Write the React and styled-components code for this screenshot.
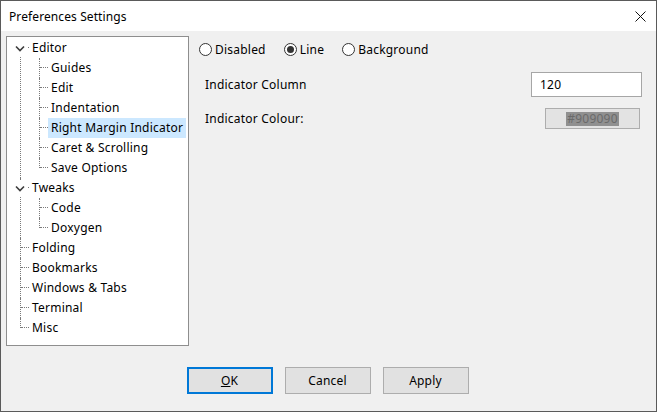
import React from 'react';
import styled, { createGlobalStyle } from 'styled-components';

const Global = createGlobalStyle`
  html, body { margin: 0; padding: 0; background: #f0f0f0; }
  body { font-family: "Noto Sans", "Liberation Sans", sans-serif; font-size: 12px; letter-spacing: 0.22px; color: #000; }
  * { box-sizing: border-box; }
`;

const Window = styled.div`
  width: 657px;
  height: 412px;
  border: 1px solid #5a5a5a;
  background: #f0f0f0;
  display: flex;
  flex-direction: column;
`;

const TitleBar = styled.div`
  height: 30px;
  background: #fff;
  display: flex;
  align-items: center;
  justify-content: space-between;
  padding: 0 10px 0 8px;
  font-size: 12px;
  letter-spacing: 0.1px;
`;

const Body = styled.div`
  flex: 1;
  display: flex;
  flex-direction: column;
  padding: 5px 14px 17px 5px;
`;

const Main = styled.div`
  display: flex;
  gap: 10px;
  height: 310px;
`;

const TreePanel = styled.ul`
  width: 183px;
  height: 310px;
  margin: 0;
  padding: 1px 0 0 0;
  list-style: none;
  background: #fff;
  border: 1px solid #8e8e8e;
`;

const Group = styled.ul`
  margin: 0;
  padding: 0;
  list-style: none;
`;

const Item = styled.li`
  position: relative;
  &::before {
    content: '';
    position: absolute;
    left: ${p => 13 + 19 * p.$level}px;
    top: ${p => (p.$first && p.$level === 0 ? 9 : 0)}px;
    height: ${p => (p.$last ? '10px' : p.$first && p.$level === 0 ? 'calc(100% - 9px)' : '100%')};
    border-left: 1px dotted #7a7a7a;
  }
  &::after {
    content: '';
    position: absolute;
    left: ${p => 14 + 19 * p.$level}px;
    top: 9px;
    width: 8px;
    border-top: 1px dotted #7a7a7a;
  }
`;

const Row = styled.div`
  display: flex;
  align-items: center;
  height: 20px;
  padding-left: ${p => 5 + 19 * p.$level}px;
`;

const Gutter = styled.span`
  position: relative;
  z-index: 1;
  width: 16px;
  height: 16px;
  display: flex;
  align-items: center;
  justify-content: center;
  background: ${p => (p.$mask ? '#fff' : 'transparent')};
`;

const Label = styled.span`
  margin-left: 1px;
  padding: 0 3px;
  line-height: 20px;
  height: 20px;
  white-space: nowrap;
  background: ${p => (p.$selected ? '#cce8ff' : 'transparent')};
`;

const Panel = styled.div`
  flex: 1;
  display: flex;
  flex-direction: column;
`;

const RadioRow = styled.div`
  display: flex;
  align-items: center;
  height: 20px;
  margin-top: 3px;
`;

const RadioOption = styled.label`
  display: flex;
  align-items: center;
  gap: 3px;
  margin-right: ${p => p.$gap || 0}px;
`;

const RadioCircle = styled.span`
  width: 13px;
  height: 13px;
  border-radius: 50%;
  border: 1px solid #333;
  background: #fff;
  display: flex;
  align-items: center;
  justify-content: center;
  &::after {
    content: '';
    width: 7px;
    height: 7px;
    border-radius: 50%;
    background: ${p => (p.$checked ? '#333' : 'transparent')};
  }
`;

const FieldRow = styled.div`
  display: flex;
  align-items: center;
  justify-content: space-between;
  height: ${p => p.$h}px;
  margin-top: ${p => p.$mt}px;
  padding-left: 6px;
`;

const FieldLabel = styled.span`
  margin-top: -1px;
`;

const TextInput = styled.div`
  width: 111px;
  height: 25px;
  background: #fff;
  border: 1px solid #a6a6a6;
  display: flex;
  align-items: center;
  padding-left: 8px;
`;

const ColourButton = styled.div`
  width: 95px;
  height: 21px;
  margin-right: 2px;
  background: #e3e3e3;
  border: 1px solid #adadad;
  display: flex;
  align-items: center;
  justify-content: center;
`;

const ColourText = styled.span`
  background: #909090;
  color: #6a6a6a;
  line-height: 14px;
  padding: 0 1px;
`;

const Footer = styled.div`
  display: flex;
  justify-content: center;
  gap: 12px;
  margin-top: 21px;
  padding-left: 7px;
`;

const Button = styled.div`
  width: 86px;
  height: 27px;
  background: #e1e1e1;
  border: ${p => (p.$default ? '2px solid #0078d7' : '1px solid #adadad')};
  display: flex;
  align-items: center;
  justify-content: center;
`;

const Chevron = () => (
  <svg width="10" height="7" viewBox="0 0 10 7">
    <polyline points="1,1.5 5,5.5 9,1.5" fill="none" stroke="#3d3d3d" strokeWidth="1.6" />
  </svg>
);

const CloseIcon = () => (
  <svg width="11" height="11" viewBox="0 0 11 11">
    <path d="M0.5 0.5 L10.5 10.5 M10.5 0.5 L0.5 10.5" stroke="#111" strokeWidth="1" />
  </svg>
);

const tree = [
  {
    label: 'Editor',
    children: [
      { label: 'Guides' },
      { label: 'Edit' },
      { label: 'Indentation' },
      { label: 'Right Margin Indicator', selected: true },
      { label: 'Caret & Scrolling' },
      { label: 'Save Options' },
    ],
  },
  { label: 'Tweaks', children: [{ label: 'Code' }, { label: 'Doxygen' }] },
  { label: 'Folding' },
  { label: 'Bookmarks' },
  { label: 'Windows & Tabs' },
  { label: 'Terminal' },
  { label: 'Misc' },
];

function TreeNode({ node, level, first, last }) {
  const hasChildren = !!node.children;
  return (
    <Item $level={level} $first={first} $last={last}>
      <Row $level={level}>
        <Gutter $mask={hasChildren}>{hasChildren && <Chevron />}</Gutter>
        <Label $selected={node.selected}>{node.label}</Label>
      </Row>
      {hasChildren && (
        <Group>
          {node.children.map((c, i) => (
            <TreeNode key={c.label} node={c} level={level + 1} first={i === 0} last={i === node.children.length - 1} />
          ))}
        </Group>
      )}
    </Item>
  );
}

export default function App() {
  return (
    <>
      <Global />
      <Window>
        <TitleBar>
          <span>Preferences Settings</span>
          <CloseIcon />
        </TitleBar>
        <Body>
          <Main>
            <TreePanel>
              {tree.map((n, i) => (
                <TreeNode key={n.label} node={n} level={0} first={i === 0} last={i === tree.length - 1} />
              ))}
            </TreePanel>
            <Panel>
              <RadioRow>
                <RadioOption $gap={18}>
                  <RadioCircle />
                  <span>Disabled</span>
                </RadioOption>
                <RadioOption $gap={18}>
                  <RadioCircle $checked />
                  <span>Line</span>
                </RadioOption>
                <RadioOption>
                  <RadioCircle />
                  <span>Background</span>
                </RadioOption>
              </RadioRow>
              <FieldRow $h={25} $mt={13}>
                <FieldLabel>Indicator Column</FieldLabel>
                <TextInput>120</TextInput>
              </FieldRow>
              <FieldRow $h={21} $mt={11}>
                <FieldLabel>Indicator Colour:</FieldLabel>
                <ColourButton>
                  <ColourText>#909090</ColourText>
                </ColourButton>
              </FieldRow>
            </Panel>
          </Main>
          <Footer>
            <Button $default>
              <span><u>O</u>K</span>
            </Button>
            <Button>Cancel</Button>
            <Button>Apply</Button>
          </Footer>
        </Body>
      </Window>
    </>
  );
}
